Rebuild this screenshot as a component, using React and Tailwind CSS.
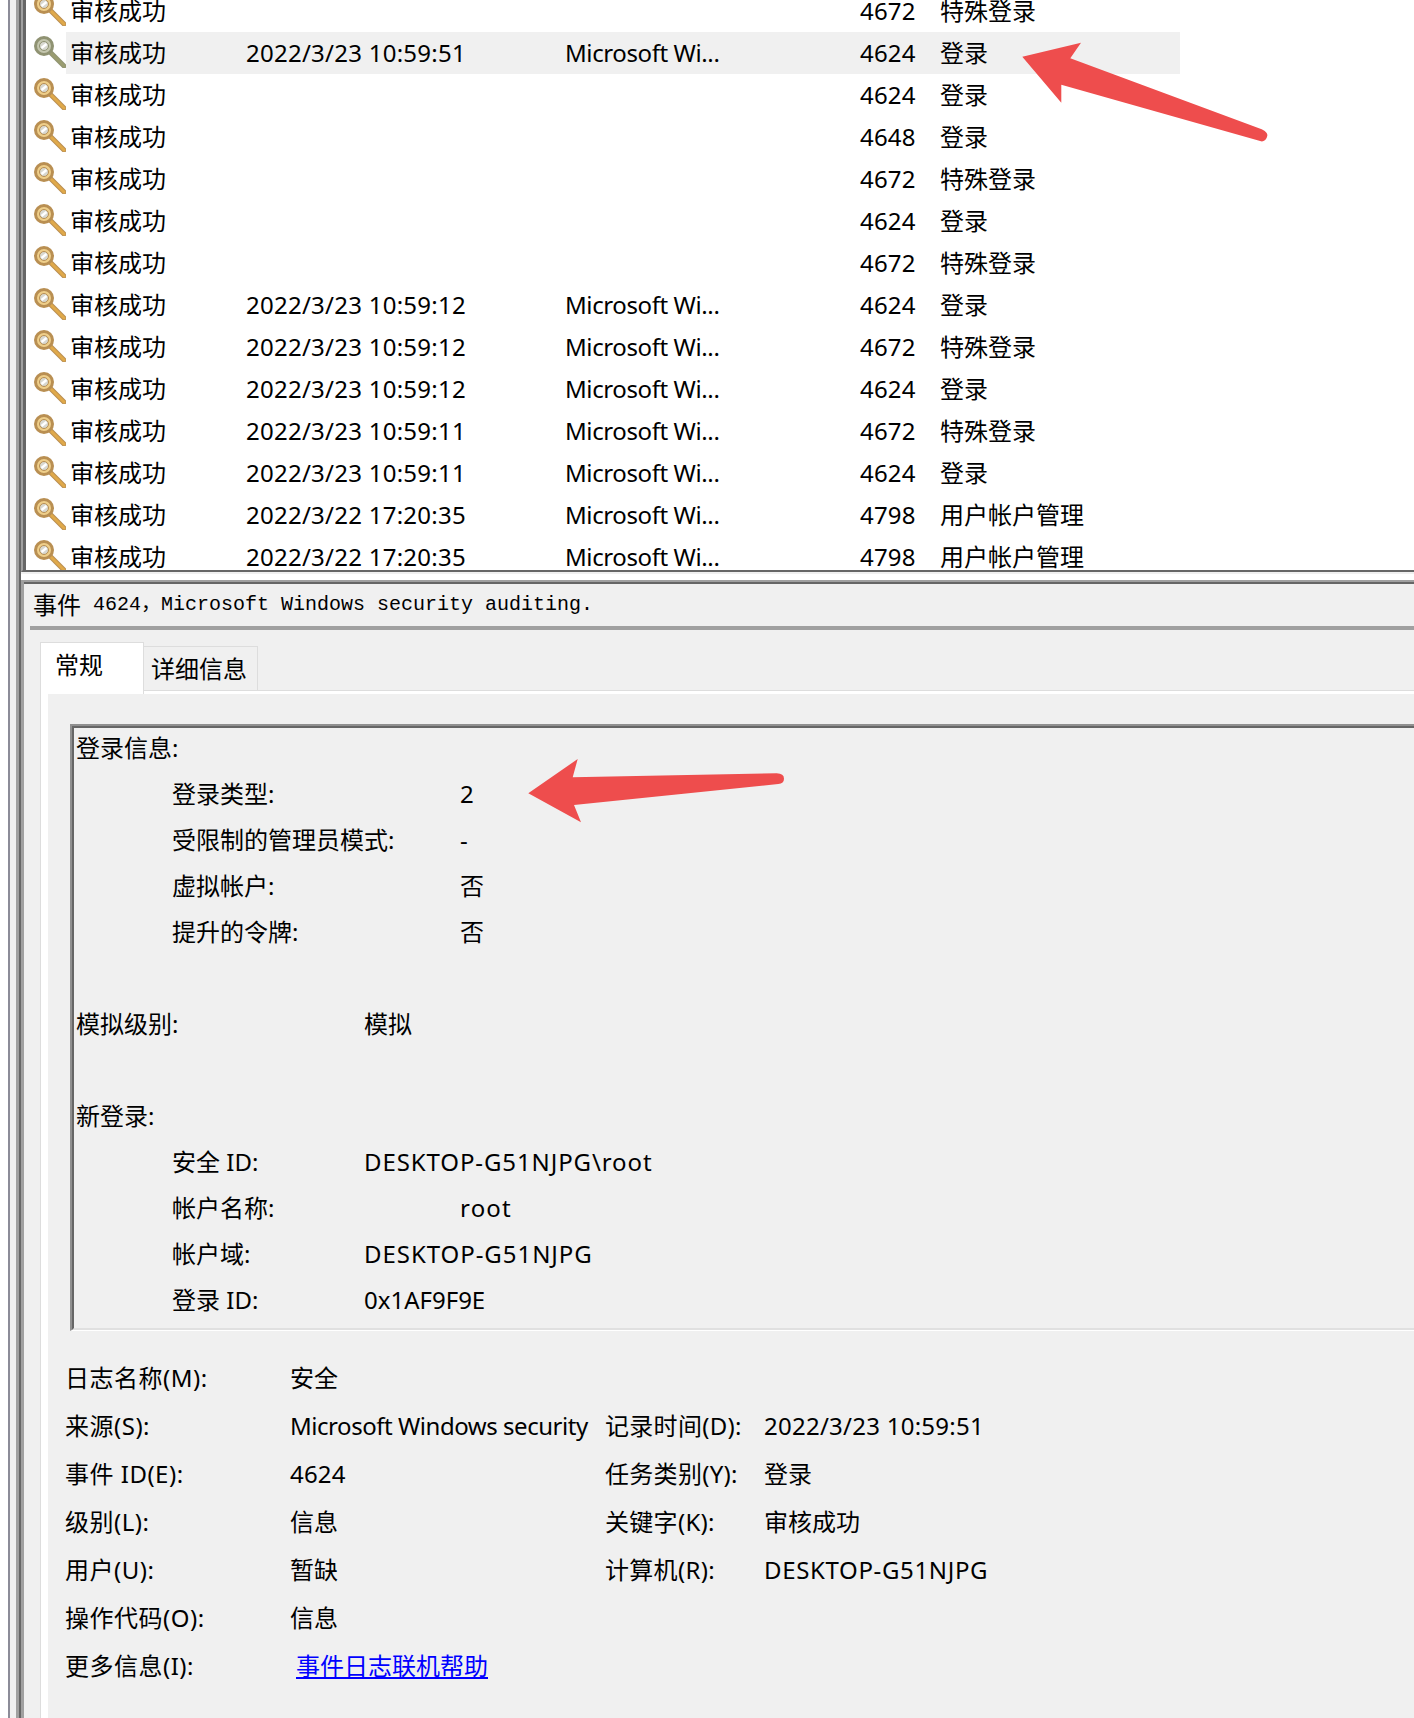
import React from 'react';

const FONT = '"Noto Sans", "Noto Sans CJK SC", sans-serif';

const rows = [
  { date: '', src: '', id: '4672', cat: '特殊登录' },
  { date: '2022/3/23 10:59:51', src: 'Microsoft Wi...', id: '4624', cat: '登录', selected: true },
  { date: '', src: '', id: '4624', cat: '登录' },
  { date: '', src: '', id: '4648', cat: '登录' },
  { date: '', src: '', id: '4672', cat: '特殊登录' },
  { date: '', src: '', id: '4624', cat: '登录' },
  { date: '', src: '', id: '4672', cat: '特殊登录' },
  { date: '2022/3/23 10:59:12', src: 'Microsoft Wi...', id: '4624', cat: '登录' },
  { date: '2022/3/23 10:59:12', src: 'Microsoft Wi...', id: '4672', cat: '特殊登录' },
  { date: '2022/3/23 10:59:12', src: 'Microsoft Wi...', id: '4624', cat: '登录' },
  { date: '2022/3/23 10:59:11', src: 'Microsoft Wi...', id: '4672', cat: '特殊登录' },
  { date: '2022/3/23 10:59:11', src: 'Microsoft Wi...', id: '4624', cat: '登录' },
  { date: '2022/3/22 17:20:35', src: 'Microsoft Wi...', id: '4798', cat: '用户帐户管理' },
  { date: '2022/3/22 17:20:35', src: 'Microsoft Wi...', id: '4798', cat: '用户帐户管理' },
];

function KeyIcon({ faded }) {
  const edge = faded ? '#8f9272' : '#b98f52';
  const fill = faded ? '#c4c6ae' : '#efcf8a';
  const shaft = faded ? '#9a9c70' : '#e0a94a';
  return (
    <svg width="33" height="33" viewBox="0 0 33 33" className="mt-[3px] shrink-0 self-start">
      <path d="M17 17 L31 31" stroke={edge} strokeWidth="5" strokeLinecap="round" />
      <path d="M17 17 L31 31" stroke={shaft} strokeWidth="3" strokeLinecap="round" />
      <circle cx="11" cy="11" r="8.5" fill={fill} stroke={edge} strokeWidth="3" />
      <circle cx="11" cy="11" r="4.5" fill="#d8d8d0" stroke={edge} strokeWidth="1" />
      <path d="M8.5 13 L13.5 9" stroke="#ffffff" strokeWidth="2.5" />
    </svg>
  );
}

function EventRow({ row }) {
  return (
    <div className="flex h-[42px] items-center pl-[7px]">
      <KeyIcon faded={row.selected} />
      <div className={`flex h-full w-[1114px] items-center pb-px text-[24px] text-black ${row.selected ? 'bg-[#f0f0f0]' : ''}`}>
        <span className="w-[180px] pl-[4px]">审核成功</span>
        <span className="w-[319px] tracking-[0.25px]">{row.date}</span>
        <span className="w-[295px] tracking-[-0.4px]">{row.src}</span>
        <span className="w-[80px] tracking-[0.2px]">{row.id}</span>
        <span>{row.cat}</span>
      </div>
    </div>
  );
}

function Arrow({ d }) {
  return <path d={d} fill="#ee4d4d" />;
}

export default function App() {
  return (
    <div className="relative flex h-[1718px] w-[1414px] overflow-hidden bg-white pl-2 text-black" style={{ fontFamily: FONT }}>
      <div className="w-0.5 shrink-0 bg-[#8c8c98]" />
      <div className="w-1.5 shrink-0 bg-[#f0f0f0]" />
      <div className="w-[3px] shrink-0 bg-[#a0a0a0]" />
      <div className="w-0.5 shrink-0 bg-[#666666]" />

      <div className="flex min-w-0 flex-1 flex-col bg-[#f0f0f0]">
        <div className="h-[572px] shrink-0 overflow-hidden border-b-2 border-l-2 border-b-[#666666] border-l-[#a0a0a0]">
          <div className="flex h-full flex-col overflow-hidden border-l-[3px] border-[#666666] bg-white">
            <div className="-mt-[10px]">
              {rows.map((row, i) => <EventRow key={i} row={row} />)}
            </div>
          </div>
        </div>

        <div className="h-0.5 shrink-0 bg-[#f0f0f0]" />
        <div className="h-[6px] shrink-0 bg-white" />

        <div className="flex flex-1 flex-col border-l-[3px] border-t-2 border-l-[#a0a0a0] border-t-[#a0a0a0]">
          <div className="flex flex-1 flex-col border-t-2 border-[#666666]">
            <div className="flex h-[42px] shrink-0 items-center pl-[9px] text-[24px]">
              <span>事件</span>
              <span className="ml-3 text-[20px]" style={{ fontFamily: '"Liberation Mono", "Noto Sans CJK SC", monospace' }}>4624，Microsoft Windows security auditing.</span>
            </div>
            <div className="ml-1.5 h-1 shrink-0 bg-[#a0a0a0]" />

            <div className="ml-4 mt-3 flex h-[48px] shrink-0 items-start text-[24px]">
              <div className="relative z-10 h-[52px] w-[104px] border-l border-r border-t border-[#dddddd] bg-white pl-[14px] leading-[44px]">常规</div>
              <div className="mt-1 h-[45px] w-[114px] border-r border-t border-[#dddddd] pl-[7px] leading-[44px]">详细信息</div>
            </div>

            <div className="ml-4 flex flex-1 flex-col border-l border-t border-[#dddddd] bg-white pl-[7px] pt-[3px]">
              <div className="flex flex-1 flex-col bg-[#f0f0f0] pl-[22px] pt-[30px]">
                <div className="shrink-0 border-b border-l-2 border-t-2 border-b-white border-l-[#909090] border-t-[#909090]">
                  <div className="h-[604px] overflow-hidden border-b-2 border-l-2 border-t-2 border-b-[#e0e0e0] border-l-[#666666] border-t-[#666666] pl-[2px]">
                    <pre className="-mt-[3px] whitespace-pre text-[24px] leading-[46px] [tab-size:96px]" style={{ fontFamily: FONT }}>
                      {'登录信息:\n\t登录类型:\t\t2\n\t受限制的管理员模式:\t-\n\t虚拟帐户:\t\t否\n\t提升的令牌:\t\t否\n\n模拟级别:\t\t模拟\n\n新登录:\n\t安全 ID:\t\t'}
                      <span className="tracking-[0.9px]">DESKTOP-G51NJPG\root</span>
                      {'\n\t帐户名称:\t\t'}
                      <span className="tracking-[1.2px]">root</span>
                      {'\n\t帐户域:\t\t'}
                      <span className="tracking-[0.95px]">DESKTOP-G51NJPG</span>
                      {'\n\t登录 ID:\t\t0x1AF9F9E'}
                    </pre>
                  </div>
                </div>

                <div className="-ml-[5px] mt-[23px] grid grid-cols-[225px_315px_159px_1fr] text-[24px] leading-[48px]">
                  <div className="tracking-[0.5px]">日志名称(M):</div>
                  <div>安全</div>
                  <div />
                  <div />

                  <div className="tracking-[0.5px]">来源(S):</div>
                  <div className="whitespace-nowrap tracking-[-0.46px]">Microsoft Windows security</div>
                  <div className="tracking-[0.3px]">记录时间(D):</div>
                  <div className="tracking-[0.25px]">2022/3/23 10:59:51</div>

                  <div className="tracking-[0.5px]">事件 ID(E):</div>
                  <div className="tracking-[0.2px]">4624</div>
                  <div className="tracking-[0.3px]">任务类别(Y):</div>
                  <div>登录</div>

                  <div className="tracking-[0.5px]">级别(L):</div>
                  <div>信息</div>
                  <div className="tracking-[0.3px]">关键字(K):</div>
                  <div>审核成功</div>

                  <div className="tracking-[0.5px]">用户(U):</div>
                  <div>暂缺</div>
                  <div className="tracking-[0.3px]">计算机(R):</div>
                  <div className="tracking-[0.65px]">DESKTOP-G51NJPG</div>

                  <div className="tracking-[0.5px]">操作代码(O):</div>
                  <div>信息</div>
                  <div />
                  <div />

                  <div className="tracking-[0.5px]">更多信息(I):</div>
                  <div className="col-span-3 pl-1.5 text-[#0000ff] underline">事件日志联机帮助</div>
                </div>
              </div>
            </div>
          </div>
        </div>
      </div>

      <svg className="pointer-events-none absolute left-0 top-0" width="1414" height="1718">
        <Arrow d="M1022.3 56.7 L1081 42.7 L1070.3 58.3 L1261.7 129.3 Q1269 133 1267 137 Q1265 142 1261 141.3 L1061.3 84.7 L1061.3 102.7 Z" />
        <Arrow d="M528.3 793.3 L577.7 759 L572.7 777.3 L776.7 773.3 Q784 773.5 784 778.7 Q784 783.5 778.3 784 L574 805 L581 822.3 Z" />
      </svg>
    </div>
  );
}
